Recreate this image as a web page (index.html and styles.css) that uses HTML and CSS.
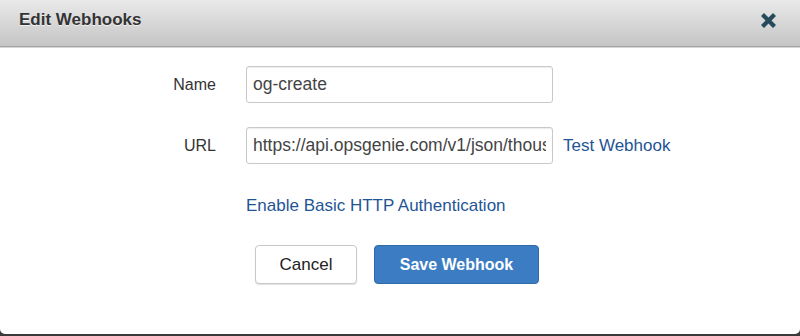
FILE: index.html
```html
<!DOCTYPE html>
<html>
<head>
<meta charset="utf-8">
<link rel="stylesheet" href="styles.css">
</head>
<body>
<div class="modal">
  <div class="modal-header">
    <h1 class="title">Edit Webhooks</h1>
    <button class="close" aria-label="Close">
      <svg width="15" height="15" viewBox="0 0 15 15"><path d="M3 0 L7.5 4.5 L12 0 L15 3 L10.5 7.5 L15 12 L12 15 L7.5 10.5 L3 15 L0 12 L4.5 7.5 L0 3 Z" fill="#264a5a"/></svg>
    </button>
  </div>
  <form class="form">
    <label class="label" for="name">Name</label>
    <input class="field" id="name" type="text" value="og-create">
    <span></span>

    <label class="label row2" for="url">URL</label>
    <input class="field row2" id="url" type="text" value="https://api.opsgenie.com/v1/json/thousandeyes?apiKey=1234">
    <a class="link test row2" href="#">Test Webhook</a>

    <span></span>
    <a class="link auth" href="#">Enable Basic HTTP Authentication</a>
    <span></span>

    <div class="actions">
      <button type="button" class="btn btn-default">Cancel</button>
      <button type="button" class="btn btn-primary">Save Webhook</button>
    </div>
  </form>
</div>
</body>
</html>
```

FILE: styles.css
```css
html, body {
  margin: 0;
  padding: 0;
  background: #3a3a3a;
  font-family: "Liberation Sans", Arial, Helvetica, sans-serif;
}

.modal {
  width: 800px;
  height: 334px;
  background: #fff;
  border-radius: 0 0 5px 5px;
  overflow: hidden;
  box-sizing: border-box;
}

.modal-header {
  height: 47px;
  box-sizing: border-box;
  display: flex;
  align-items: flex-start;
  justify-content: space-between;
  padding: 10px 24px 0 19px;
  background: linear-gradient(#e9e9e9, #c5c5c5);
  border-bottom: 1px solid #a3a3a3;
  box-shadow: 0 1px 0 #d6d6d6;
}

.title {
  margin: 0;
  font-size: 17px;
  line-height: 20px;
  font-weight: bold;
  color: #333;
  text-shadow: 0 1px 0 rgba(255,255,255,0.7);
}

.close {
  border: 0;
  background: none;
  padding: 0;
  margin-top: 3px;
  width: 15px;
  height: 15px;
  display: block;
  cursor: pointer;
}

.close svg { display: block; }

.form {
  display: grid;
  grid-template-columns: 216px 307px 1fr;
  column-gap: 30px;
  align-items: center;
  padding-top: 19px;
}

.label {
  text-align: right;
  font-size: 16px;
  color: #333;
}

.field {
  height: 37px;
  box-sizing: border-box;
  width: 307px;
  border: 1px solid #c9c9c9;
  border-radius: 3px;
  padding: 0 6px;
  font-family: inherit;
  font-size: 17.5px;
  color: #444;
  box-shadow: inset 0 1px 1px rgba(0,0,0,0.075);
  outline: none;
}

.row2 {
  margin-top: 24px;
}

.link {
  font-size: 17px;
  color: #1f5596;
  text-decoration: none;
}

.test {
  margin-left: -20px;
}

.auth {
  grid-column: 2 / 4;
  margin-top: 32px;
  line-height: 20px;
}

.actions {
  grid-column: 1 / 4;
  display: flex;
  justify-content: center;
  gap: 17px;
  margin-top: 29px;
  padding-right: 6px;
}

.btn {
  height: 39px;
  box-sizing: border-box;
  padding: 0 20px;
  border-radius: 4px;
  font-family: inherit;
  font-size: 16px;
  cursor: pointer;
}

.btn-default {
  width: 102px;
  background: #fff;
  border: 1px solid #c8c8c8;
  color: #222;
  font-size: 17px;
  box-shadow: 0 1px 1px rgba(0,0,0,0.12);
}

.btn-primary {
  width: 165px;
  background: #3b7cc2;
  border: 1px solid #2f6aa9;
  color: #fff;
  font-weight: bold;
}
```
